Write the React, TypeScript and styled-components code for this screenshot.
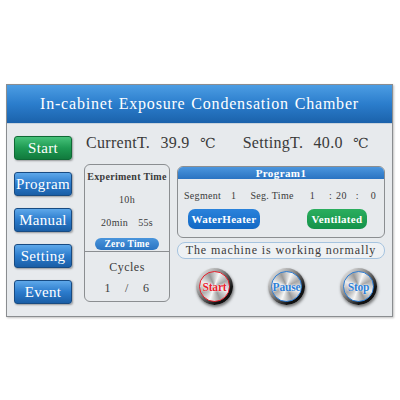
import styled, { createGlobalStyle } from "styled-components";

const GlobalStyle = createGlobalStyle`
  body {
    margin: 0;
    background: #fff;
    font-family: "Liberation Serif", "DejaVu Serif", serif;
  }
`;

const Page = styled.div`
  width: 400px;
  height: 400px;
  padding: 84px 0 0 6px;
  box-sizing: border-box;
`;

const Frame = styled.div`
  width: 387px;
  height: 233px;
  box-sizing: border-box;
  border: 1px solid #8a8d90;
  background: #e7eaed;
  display: flex;
  flex-direction: column;
  box-shadow: 1px 1px 2px rgba(0, 0, 0, 0.25);
`;

const TitleBar = styled.div`
  height: 38px;
  flex-shrink: 0;
  background: linear-gradient(#4c9de3, #2b7dcc 50%, #1b62ab);
  border-bottom: 1px solid #c9d3dc;
  color: #fff;
  display: flex;
  align-items: center;
  justify-content: center;
  font-size: 16px;
  letter-spacing: 0.8px;
  word-spacing: 1px;
`;

const Body = styled.div`
  display: flex;
  gap: 12px;
  padding: 12px 7px 0 7px;
`;

const Sidebar = styled.div`
  display: flex;
  flex-direction: column;
  gap: 12px;
`;

const NavButton = styled.div<{ $green?: boolean }>`
  width: 58px;
  height: 24px;
  box-sizing: border-box;
  border-radius: 3px;
  border: 1px solid ${(p) => (p.$green ? "#0f6a35" : "#184b82")};
  background: ${(p) =>
    p.$green
      ? "linear-gradient(#47c27a, #1e9a52 50%, #117a3d)"
      : "linear-gradient(#5ea8ea, #2b7bcc 50%, #1a5ea6)"};
  box-shadow: 1px 1px 2px rgba(0, 0, 0, 0.35);
  color: #fff;
  font-size: 15px;
  display: flex;
  align-items: center;
  justify-content: center;
  letter-spacing: 0.3px;
`;

const Main = styled.div`
  flex: 1;
  display: flex;
  flex-direction: column;
`;

const TempRow = styled.div`
  display: flex;
  gap: 28px;
  margin-top: -3px;
  padding-left: 2px;
  height: 20px;
  line-height: 20px;
  font-size: 16px;
  color: #3a3a3a;
  letter-spacing: 0.3px;
  word-spacing: 6px;
`;

const Unit = styled.span`
  font-size: 14px;
  letter-spacing: -1px;
`;

const ContentRow = styled.div`
  display: flex;
  gap: 7px;
  margin-top: 11px;
`;

const ExpBox = styled.div`
  width: 86px;
  height: 138px;
  box-sizing: border-box;
  border: 1.5px solid #8b8e91;
  border-radius: 6px;
  display: flex;
  flex-direction: column;
  color: #3a3a3a;
`;

const ExpTop = styled.div`
  height: 87px;
  display: flex;
  flex-direction: column;
  align-items: center;
  padding-top: 6px;
  box-sizing: border-box;
  border-bottom: 1.5px solid #8b8e91;
`;

const SmallLine = styled.div<{ $top: number; $bold?: boolean }>`
  margin-top: ${(p) => p.$top}px;
  font-size: 10px;
  line-height: 12px;
  font-weight: ${(p) => (p.$bold ? 700 : 400)};
  letter-spacing: 0.3px;
  display: flex;
  gap: 10px;
`;

const ZeroPill = styled.div`
  margin-top: 9px;
  width: 64px;
  height: 12px;
  border-radius: 6px;
  background: linear-gradient(#4a95dc, #2a74c2);
  color: #fff;
  font-size: 9.5px;
  font-weight: 700;
  line-height: 12px;
  text-align: center;
  letter-spacing: 0.3px;
`;

const ExpBottom = styled.div`
  flex: 1;
  display: flex;
  flex-direction: column;
  align-items: center;
  padding-top: 8px;
  font-size: 12px;
  letter-spacing: 0.5px;
`;

const Cycles = styled.div`
  display: flex;
  gap: 14px;
  margin-top: 6px;
`;

const RightCol = styled.div`
  width: 208px;
  margin-top: 2px;
  display: flex;
  flex-direction: column;
`;

const ProgramBox = styled.div`
  height: 72px;
  box-sizing: border-box;
  border: 1.5px solid #8b8e91;
  border-radius: 6px;
  overflow: hidden;
  display: flex;
  flex-direction: column;
`;

const ProgramHeader = styled.div`
  height: 12px;
  background: linear-gradient(#4b96de, #2a73c1);
  color: #fff;
  font-size: 11px;
  font-weight: 700;
  line-height: 12px;
  text-align: center;
  letter-spacing: 0.4px;
`;

const SegRow = styled.div`
  display: flex;
  align-items: center;
  height: 12px;
  margin-top: 10px;
  padding-left: 6px;
  font-size: 10px;
  color: #3a3a3a;
  letter-spacing: 0.3px;
`;

const Field = styled.span<{ $gap: number }>`
  margin-left: ${(p) => p.$gap}px;
`;

const PillRow = styled.div`
  display: flex;
  justify-content: space-between;
  align-items: center;
  padding: 0 17px 0 10px;
  margin-top: 8px;
`;

const StatePill = styled.div<{ $green?: boolean; $w: number }>`
  width: ${(p) => p.$w}px;
  height: 20px;
  border-radius: 7px;
  background: ${(p) =>
    p.$green
      ? "linear-gradient(#2bae5e, #14924a)"
      : "linear-gradient(#2a82db, #1268c4)"};
  color: #fff;
  font-size: 11px;
  font-weight: 700;
  line-height: 20px;
  text-align: center;
  letter-spacing: 0.3px;
`;

const StatusBar = styled.div`
  margin-top: 4px;
  height: 17px;
  box-sizing: border-box;
  border: 1px solid #a6c4e0;
  border-radius: 8px;
  background: #eef1f4;
  color: #3a3a3a;
  font-size: 12px;
  line-height: 15px;
  text-align: center;
  letter-spacing: 0.9px;
`;

const RoundRow = styled.div`
  display: flex;
  gap: 35px;
  padding-left: 19px;
  margin-top: 9px;
`;

const RoundOuter = styled.div`
  width: 37px;
  height: 37px;
  box-sizing: border-box;
  border-radius: 50%;
  padding: 3px;
  background: linear-gradient(135deg, #f4f4f4 5%, #8c8c8c 40%, #111 75%);
  box-shadow: 1px 2px 3px rgba(0, 0, 0, 0.5);
`;

const RoundFace = styled.div<{ $color: string }>`
  width: 100%;
  height: 100%;
  box-sizing: border-box;
  border-radius: 50%;
  border: 1.5px solid ${(p) => p.$color};
  background: conic-gradient(
    from 20deg,
    #f6f6f6,
    #a8a8a8 12%,
    #ececec 25%,
    #9a9a9a 38%,
    #f6f6f6 50%,
    #a8a8a8 62%,
    #ececec 75%,
    #9a9a9a 88%,
    #f6f6f6
  );
  display: flex;
  align-items: center;
  justify-content: center;
  color: ${(p) => p.$color};
  font-size: 11.5px;
  font-weight: 700;
  letter-spacing: -0.2px;
  text-shadow: 0 0 2px #fff, 0 0 1px #fff;
`;

const navItems = ["Start", "Program", "Manual", "Setting", "Event"];

const roundItems = [
  { label: "Start", color: "#e8222e" },
  { label: "Pause", color: "#2f7fd6" },
  { label: "Stop", color: "#2f7fd6" },
];

export default function App() {
  return (
    <Page>
      <GlobalStyle />
      <Frame>
        <TitleBar>In-cabinet Exposure Condensation Chamber</TitleBar>
        <Body>
          <Sidebar>
            {navItems.map((n) => (
              <NavButton key={n} $green={n === "Start"}>
                {n}
              </NavButton>
            ))}
          </Sidebar>
          <Main>
            <TempRow>
              <span>
                CurrentT. 39.9 <Unit>℃</Unit>
              </span>
              <span>
                SettingT. 40.0 <Unit>℃</Unit>
              </span>
            </TempRow>
            <ContentRow>
              <ExpBox>
                <ExpTop>
                  <SmallLine $top={0} $bold>
                    Experiment Time
                  </SmallLine>
                  <SmallLine $top={11}>10h</SmallLine>
                  <SmallLine $top={11}>
                    <span>20min</span>
                    <span>55s</span>
                  </SmallLine>
                  <ZeroPill>Zero Time</ZeroPill>
                </ExpTop>
                <ExpBottom>
                  <span>Cycles</span>
                  <Cycles>
                    <span>1</span>
                    <span>/</span>
                    <span>6</span>
                  </Cycles>
                </ExpBottom>
              </ExpBox>
              <RightCol>
                <ProgramBox>
                  <ProgramHeader>Program1</ProgramHeader>
                  <SegRow>
                    <Field $gap={0}>Segment</Field>
                    <Field $gap={10}>1</Field>
                    <Field $gap={14}>Seg. Time</Field>
                    <Field $gap={16}>1</Field>
                    <Field $gap={14}>:</Field>
                    <Field $gap={4}>20</Field>
                    <Field $gap={9}>:</Field>
                    <Field $gap={12}>0</Field>
                  </SegRow>
                  <PillRow>
                    <StatePill $w={72}>WaterHeater</StatePill>
                    <StatePill $w={60} $green>
                      Ventilated
                    </StatePill>
                  </PillRow>
                </ProgramBox>
                <StatusBar>The machine is working normally</StatusBar>
                <RoundRow>
                  {roundItems.map((r) => (
                    <RoundOuter key={r.label}>
                      <RoundFace $color={r.color}>{r.label}</RoundFace>
                    </RoundOuter>
                  ))}
                </RoundRow>
              </RightCol>
            </ContentRow>
          </Main>
        </Body>
      </Frame>
    </Page>
  );
}
